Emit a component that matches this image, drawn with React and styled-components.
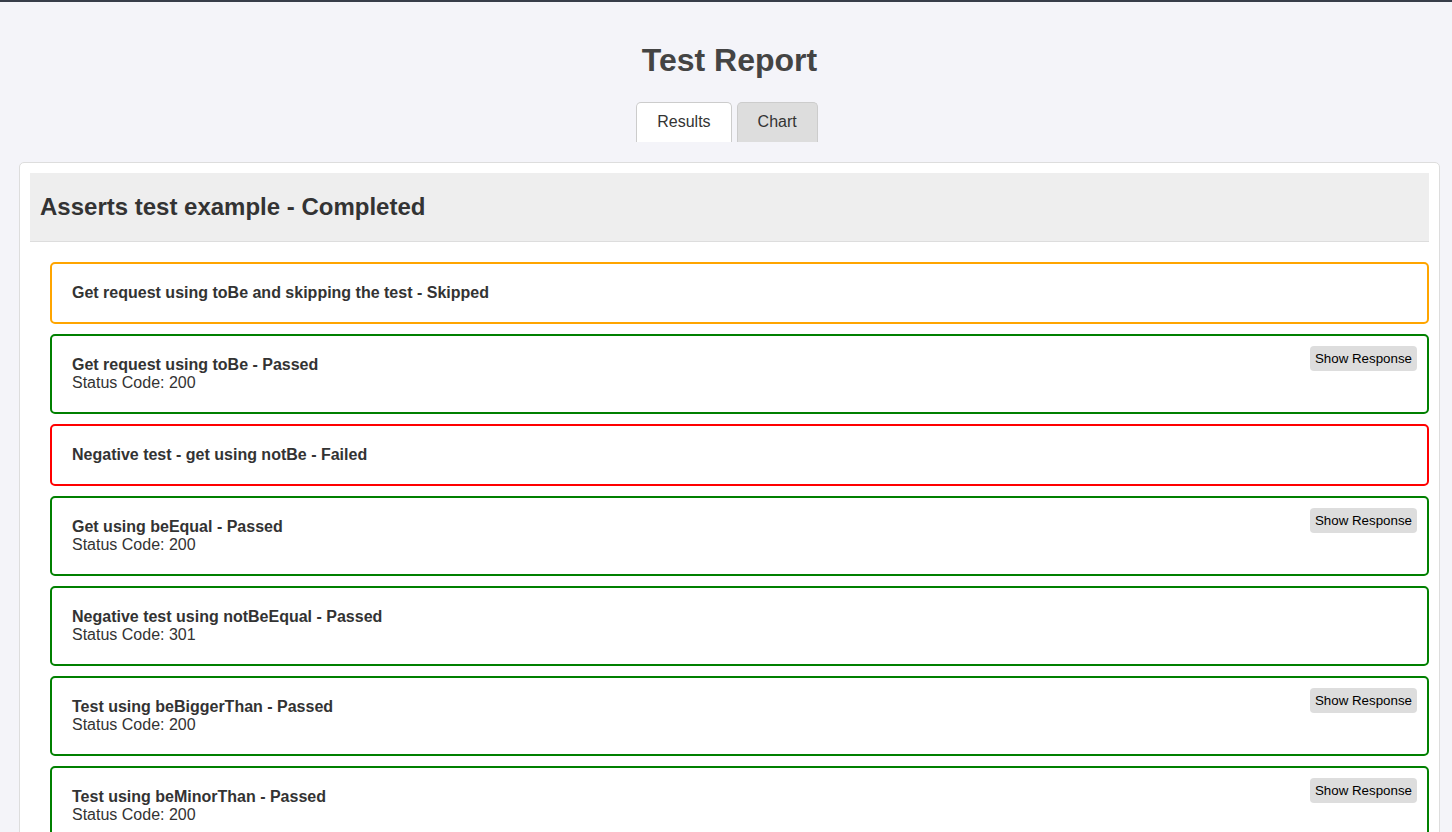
import React from "react";
import styled, { createGlobalStyle } from "styled-components";

const tests = [
  { title: "Get request using toBe and skipping the test", status: "Skipped" },
  { title: "Get request using toBe", status: "Passed", code: 200, response: true },
  { title: "Negative test - get using notBe", status: "Failed" },
  { title: "Get using beEqual", status: "Passed", code: 200, response: true },
  { title: "Negative test using notBeEqual", status: "Passed", code: 301 },
  { title: "Test using beBiggerThan", status: "Passed", code: 200, response: true },
  { title: "Test using beMinorThan", status: "Passed", code: 200, response: true },
];

const statusColors = {
  Passed: "#008000",
  Failed: "#ff0000",
  Skipped: "#ffa500",
};

const GlobalStyle = createGlobalStyle`
  html, body {
    margin: 0;
    padding: 0;
    background: #f4f4f9;
    font-family: "Liberation Sans", Arial, sans-serif;
    color: #333;
    overflow: hidden;
  }
`;

const TopBar = styled.div`
  height: 2px;
  background: #373d49;
`;

const Page = styled.div`
  padding: 40px 12px 20px 19px;
`;

const Title = styled.h1`
  margin: 0;
  font-size: 32px;
  line-height: 37px;
  font-weight: bold;
  text-align: center;
  color: #444;
`;

const Tabs = styled.div`
  display: flex;
  justify-content: center;
  gap: 5px;
  margin-top: 23px;
  padding-right: 5px;
`;

const Tab = styled.button`
  font-family: "Liberation Sans", Arial, sans-serif;
  font-size: 16px;
  line-height: 18px;
  color: #333;
  padding: 10px 20px 11px;
  border: 1px solid #ccc;
  border-bottom: none;
  border-radius: 5px 5px 0 0;
  background: ${(p) => (p.$active ? "#fff" : "#ddd")};
  cursor: pointer;
`;

const Container = styled.div`
  margin-top: 20px;
  background: #fff;
  border: 1px solid #ddd;
  border-radius: 5px;
  padding: 10px;
  min-height: 700px;
`;

const SuiteHeader = styled.div`
  background: #eee;
  border-bottom: 1px solid #ddd;
  padding: 20px 10px;
`;

const SuiteTitle = styled.h2`
  margin: 0;
  font-size: 24px;
  line-height: 28px;
  font-weight: bold;
  color: #333;
`;

const List = styled.div`
  display: flex;
  flex-direction: column;
  gap: 10px;
  margin: 20px 0 0 20px;
`;

const Card = styled.div`
  position: relative;
  border: 2px solid ${(p) => statusColors[p.$status]};
  border-radius: 5px;
  padding: 20px;
  font-size: 16px;
  line-height: 18px;
`;

const CardTitle = styled.div`
  font-weight: bold;
`;

const ShowButton = styled.button`
  position: absolute;
  top: 10px;
  right: 10px;
  font-family: "Liberation Sans", Arial, sans-serif;
  font-size: 13.33px;
  line-height: 15px;
  padding: 5px;
  border: none;
  border-radius: 4px;
  background: #ddd;
  color: #000;
  cursor: pointer;
`;

export default function App() {
  return (
    <>
      <GlobalStyle />
      <TopBar />
      <Page>
        <Title>Test Report</Title>
        <Tabs>
          <Tab $active>Results</Tab>
          <Tab>Chart</Tab>
        </Tabs>
        <Container>
          <SuiteHeader>
            <SuiteTitle>Asserts test example - Completed</SuiteTitle>
          </SuiteHeader>
          <List>
            {tests.map((t, i) => (
              <Card key={i} $status={t.status}>
                <CardTitle>
                  {t.title} - {t.status}
                </CardTitle>
                {t.code && <div>Status Code: {t.code}</div>}
                {t.response && <ShowButton>Show Response</ShowButton>}
              </Card>
            ))}
          </List>
        </Container>
      </Page>
    </>
  );
}
